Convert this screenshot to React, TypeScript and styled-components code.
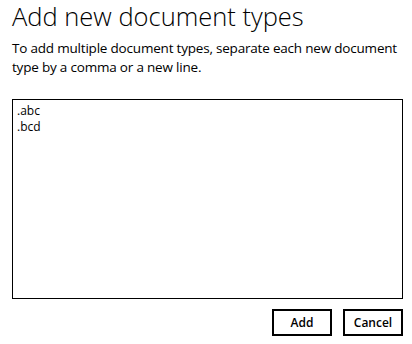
import styled, { createGlobalStyle } from 'styled-components';

const GlobalStyle = createGlobalStyle`
  html, body {
    margin: 0;
    padding: 0;
    background: #ffffff;
  }
  body {
    font-family: 'Open Sans', 'Noto Sans', sans-serif;
    color: #000000;
  }
`;

export default function App() {
  return (
    <>
      <GlobalStyle />
      <Dialog>
        <Title>Add new document types</Title>
        <Description>
          To add multiple document types, separate each new document type by a comma or a new line.
        </Description>
        <TypesInput defaultValue={'.abc\n.bcd'} spellCheck={false} />
        <Actions>
          <ActionButton>Add</ActionButton>
          <ActionButton>Cancel</ActionButton>
        </Actions>
      </Dialog>
    </>
  );
}

const Dialog = styled.div`
  width: 391px;
  padding: 0 9px 0 12px;
  display: flex;
  flex-direction: column;
`;

const Title = styled.h1`
  margin: 0;
  font-size: 25.5px;
  font-weight: 300;
  line-height: 32px;
  letter-spacing: 0;
`;

const Description = styled.p`
  margin: 7px 0 0;
  font-size: 13.5px;
  line-height: 19px;
  letter-spacing: -0.2px;
`;

const TypesInput = styled.textarea`
  margin-top: 22px;
  box-sizing: border-box;
  width: 391px;
  height: 200px;
  border: 1px solid #000000;
  border-radius: 0;
  padding: 3px 4px;
  resize: none;
  outline: none;
  font-family: 'Open Sans', 'Noto Sans', sans-serif;
  font-size: 12px;
  line-height: 16px;
  color: #000000;
`;

const Actions = styled.div`
  display: flex;
  justify-content: flex-end;
  gap: 11px;
  margin-top: 10px;
`;

const ActionButton = styled.button`
  box-sizing: border-box;
  width: 60px;
  height: 27px;
  border: 2px solid #000000;
  border-radius: 0;
  background: #ffffff;
  padding: 0;
  font-family: 'Open Sans', 'Noto Sans', sans-serif;
  font-size: 12px;
  font-weight: 600;
  color: #000000;
  cursor: pointer;
`;
